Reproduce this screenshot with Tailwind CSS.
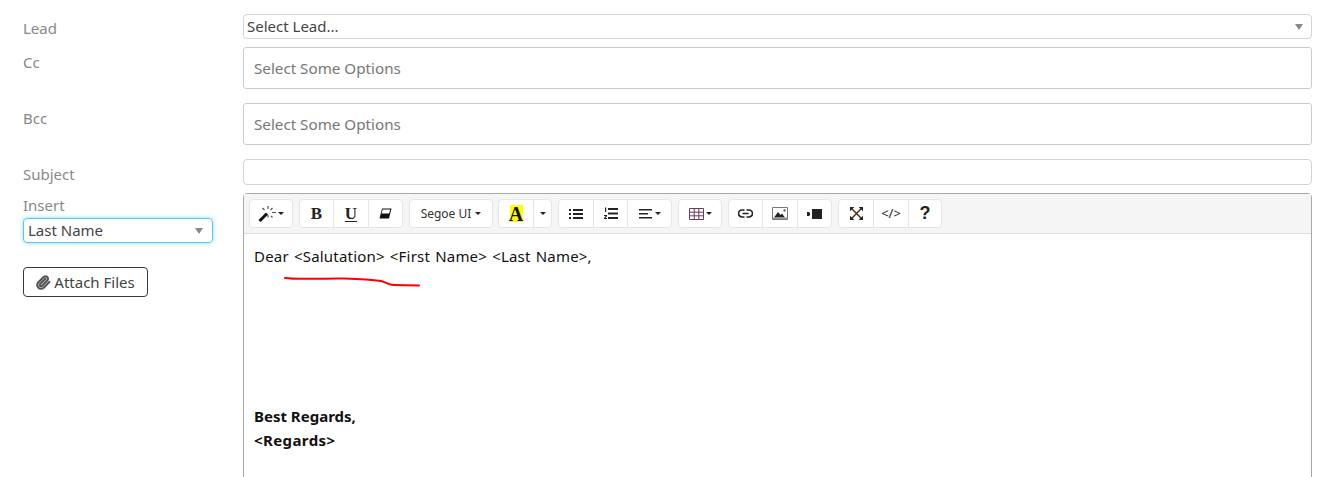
<!DOCTYPE html>
<html lang="en">
<head>
    <meta charset="UTF-8">
    <title>Compose Email</title>
    <script src="https://cdn.jsdelivr.net/npm/@tailwindcss/browser@4"></script>
</head>
<body class="bg-white overflow-hidden font-['Noto_Sans',sans-serif] text-[15px]">
<div class="h-[477px] overflow-hidden pl-[23px] pr-[21px] pt-[14px]">

    <!-- Lead -->
    <div class="flex mb-2">
        <label class="w-[220px] shrink-0 text-[#888] h-[25px] pt-[2px] leading-[24px]">Lead</label>
        <div class="flex-1 h-[25px] border border-[#ced4da] rounded-[4px] flex items-center justify-between pl-[3px] pr-2 text-[#444]">
            <span>Select Lead...</span>
            <span class="w-0 h-0 border-x-[4px] border-x-transparent border-t-[6px] border-t-[#888]"></span>
        </div>
    </div>

    <!-- Cc -->
    <div class="flex mb-[14px]">
        <label class="w-[220px] shrink-0 text-[#888] pt-[3px] leading-[24px]">Cc</label>
        <div class="flex-1 h-[42px] border border-[#ccc] rounded-[3px] flex items-center px-[10px] text-[15.2px] text-[#777]">Select Some Options</div>
    </div>

    <!-- Bcc -->
    <div class="flex mb-[14px]">
        <label class="w-[220px] shrink-0 text-[#888] pt-[3px] leading-[24px]">Bcc</label>
        <div class="flex-1 h-[42px] border border-[#ccc] rounded-[3px] flex items-center px-[10px] text-[15.2px] text-[#777]">Select Some Options</div>
    </div>

    <!-- Subject -->
    <div class="flex mb-2">
        <label class="w-[220px] shrink-0 text-[#888] h-[26px] pt-[3px] leading-[24px]">Subject</label>
        <div class="flex-1 h-[26px] border border-[#ced4da] rounded-[4px]"></div>
    </div>

    <!-- Insert + editor -->
    <div class="flex">
        <div class="w-[220px] shrink-0">
            <label class="block text-[#888] leading-[24px] w-[190px]">Insert</label>
            <div class="w-[190px] h-[25px] mt-[1px] border border-[#5cc4ee] rounded-[4px] shadow-[0_0_4px_#7fdcff] flex items-center justify-between pl-1 pr-[9px] text-[#444]">
                <span>Last Name</span>
                <span class="w-0 h-0 border-x-[4px] border-x-transparent border-t-[6px] border-t-[#888]"></span>
            </div>
            <button class="mt-6 w-[125px] h-[30px] border border-[#343a40] rounded-[4px] flex items-center justify-center gap-[3px] text-[#444]">
                <svg class="w-[15px] h-[15px]" viewBox="0 0 24 24" fill="none" stroke="#555" stroke-width="3.4" stroke-linecap="round" stroke-linejoin="round"><path d="m21.44 11.05-9.19 9.19a6 6 0 0 1-8.49-8.49l8.57-8.57A4 4 0 1 1 18 8.84l-8.59 8.57a2 2 0 0 1-2.83-2.83l8.49-8.48"/></svg>
                <span>Attach Files</span>
            </button>
        </div>

        <div class="flex-1 relative h-[300px] border border-[#a9a9a9] rounded-t-[4px]">
            <!-- Toolbar -->
            <div class="h-[40px] bg-[#f5f5f5] border-b border-[#ddd] flex pl-[5px] pt-[5px] gap-[6px]">
                <div class="flex h-[29px] bg-white border border-[#e2e6ea] rounded-[4px]">
                    <span class="w-[42px] flex items-center justify-center gap-[1px]">
                        <svg class="w-[19px] h-[17px]" viewBox="0 0 19 17" fill="none"><path d="M1.5 16 9 8.500" stroke="#111" stroke-width="3"/><path d="M10 1v3M10 10v2.500M4.500 3l2 2M14.500 3l-2 2M14 7.500h4M13 11l1.500 1.500" stroke="#555" stroke-width="1.200"/></svg>
                        <span class="w-0 h-0 border-x-[3px] border-x-transparent border-t-[3px] border-t-[#222]"></span>
                    </span>
                </div>
                <div class="flex h-[29px] bg-white border border-[#e2e6ea] rounded-[4px] divide-x divide-[#e2e6ea]">
                    <span class="w-[34px] flex items-center justify-center font-['Liberation_Serif',serif] font-bold text-[17px] text-[#222]">B</span>
                    <span class="w-[35px] flex items-center justify-center font-['Liberation_Serif',serif] font-bold text-[17px] text-[#222] underline underline-offset-2">U</span>
                    <span class="w-[33px] flex items-center justify-center">
                        <svg class="w-[13px] h-[11px]" viewBox="0 0 13 11"><path d="M3 .5h9.5L10 10.500H.5z" fill="#111"/><path d="M3.600 1.500h7.600L10.200 5.500H2.600z" fill="#fff"/></svg>
                    </span>
                </div>
                <div class="flex h-[29px] w-[84px] -mr-px bg-white border border-[#e2e6ea] rounded-[4px] items-center justify-center gap-1 text-[12px] text-[#333]">
                    <span>Segoe UI</span>
                    <span class="w-0 h-0 border-x-[3px] border-x-transparent border-t-[3px] border-t-[#222]"></span>
                </div>
                <div class="flex h-[29px] bg-white border border-[#e2e6ea] rounded-[4px] divide-x divide-[#e2e6ea]">
                    <span class="w-[35px] flex items-center justify-center">
                        <span class="w-[13px] h-[17px] bg-[#ff0] flex items-center justify-center font-['Liberation_Serif',serif] font-bold text-[20px] leading-none text-[#111]">A</span>
                    </span>
                    <span class="w-[17px] flex items-center justify-center">
                        <span class="w-0 h-0 border-x-[3px] border-x-transparent border-t-[3px] border-t-[#222]"></span>
                    </span>
                </div>
                <div class="flex h-[29px] bg-white border border-[#e2e6ea] rounded-[4px] divide-x divide-[#e2e6ea]">
                    <span class="w-[35px] flex items-center justify-center">
                        <svg class="w-[14px] h-[12px]" viewBox="0 0 14 12" fill="#222"><path d="M0 1h2v2H0zM0 5h2v2H0zM0 9h2v2H0zM4 1h10v2H4zM4 5h10v2H4zM4 9h10v2H4z"/></svg>
                    </span>
                    <span class="w-[34px] flex items-center justify-center">
                        <svg class="w-[14px] h-[13px]" viewBox="0 0 14 13" fill="#222"><path d="M4 1h10v2H4zM4 5.500h10v2H4zM4 10h10v2H4z"/><path d="M1 .5h1.200v4.500H1zM0 8h3v1L1.500 11H3v1H0v-1l1.700-2H0z"/></svg>
                    </span>
                    <span class="w-[43px] flex items-center justify-center gap-[3px]">
                        <svg class="w-[13px] h-[10px]" viewBox="0 0 13 10" fill="#222"><path d="M0 0h13v1.500H0zM0 4h9v1.500H0zM0 8h13v1.500H0z"/></svg>
                        <span class="w-0 h-0 border-x-[3px] border-x-transparent border-t-[3px] border-t-[#222]"></span>
                    </span>
                </div>
                <div class="flex h-[29px] w-[44px] bg-white border border-[#e2e6ea] rounded-[4px] items-center justify-center gap-[2px]">
                    <svg class="w-[15px] h-[12px]" viewBox="0 0 15 12" fill="none" stroke="#6b3a63"><path d="M.5.5h14v11H.5zM.5 4.200h14M.5 7.800h14M5.200.5v11M9.800.5v11"/></svg>
                    <span class="w-0 h-0 border-x-[3px] border-x-transparent border-t-[3px] border-t-[#222]"></span>
                </div>
                <div class="flex h-[29px] bg-white border border-[#e2e6ea] rounded-[4px] divide-x divide-[#e2e6ea]">
                    <span class="w-[34px] flex items-center justify-center">
                        <svg class="w-[15px] h-[9px]" viewBox="0 0 15 9" fill="none" stroke="#222" stroke-width="1.700"><path d="M6.500 1H4a3.500 3.500 0 0 0 0 7h2.500M8.500 1H11a3.500 3.500 0 0 1 0 7H8.500M4.500 4.500h6"/></svg>
                    </span>
                    <span class="w-[35px] flex items-center justify-center">
                        <svg class="w-[16px] h-[13px]" viewBox="0 0 16 13"><path d="M.5.500h15v12H.5z" fill="#fff" stroke="#777"/><path d="M2 10.500 6 5l2.500 3 1.500-1.500 3 4z" fill="#222"/><path d="M1 10.500h14V12H1z" fill="#999"/><path d="M11.500 2.500h2v2h-2z" fill="#444"/></svg>
                    </span>
                    <span class="w-[33px] flex items-center justify-center">
                        <svg class="w-[15px] h-[10px]" viewBox="0 0 15 10" fill="#222"><path d="M5 0h10v10H5z"/><path d="M0 3h2l1 1v2L2 7H0z"/></svg>
                    </span>
                </div>
                <div class="flex h-[29px] bg-white border border-[#e2e6ea] rounded-[4px] divide-x divide-[#e2e6ea]">
                    <span class="w-[35px] flex items-center justify-center">
                        <svg class="w-[13px] h-[13px]" viewBox="0 0 12 12" fill="none" stroke="#4a2c10" stroke-width="1.300"><path d="m1 1 10 10M11 1 1 11"/><path d="M0 0h4L0 4zM12 0H8l4 4zM0 12h4l-4-4zM12 12H8l4-4z" fill="#222" stroke="none"/></svg>
                    </span>
                    <span class="w-[35px] flex items-center justify-center text-[13px] text-[#222]">&lt;/&gt;</span>
                    <span class="w-[32px] flex items-center justify-center font-['Liberation_Sans',sans-serif] font-bold text-[18px] text-[#222]">?</span>
                </div>
            </div>

            <!-- Editor body -->
            <div class="px-[10px] pt-[10px] leading-[24px] text-[#111]">
                <p class="tracking-[0.2px] [word-spacing:1px]">Dear &lt;Salutation&gt; &lt;First Name&gt; &lt;Last Name&gt;,</p>
                <p class="mt-[136px] font-bold">Best Regards,</p>
                <p class="font-bold tracking-[0.4px]">&lt;Regards&gt;</p>
            </div>

            <!-- Red pen mark over the text -->
            <svg class="absolute left-[40px] top-[78px]" width="140" height="16" viewBox="0 0 140 16" fill="none" stroke="#f00" stroke-width="2" stroke-linecap="round"><path d="M1 6C15 8 40 6 60 6.500 75 7 90 8 97 9 102 10 104 13 110 13L135 13.500"/></svg>
        </div>
    </div>
</div>
</body>
</html>
